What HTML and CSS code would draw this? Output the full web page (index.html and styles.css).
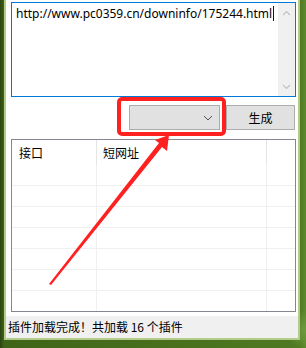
FILE: index.html
```html
<!DOCTYPE html>
<html lang="zh-CN">
<head>
  <meta charset="UTF-8">
  <title>短网址生成</title>
  <link rel="stylesheet" href="styles.css">
</head>
<body>
  <div class="window">
    <div class="client">
      <div class="input">
        <div class="text">http://www.pc0359.cn/downinfo/175244.html<span class="caret"></span></div>
        <div class="vscroll">
          <svg width="17" height="92" viewBox="0 0 17 92">
            <path d="M5 12 L8.5 8.5 L12 12" fill="none" stroke="#c2c2c2" stroke-width="1.2"/>
            <path d="M5 82 L8.5 85.5 L12 82" fill="none" stroke="#c2c2c2" stroke-width="1.2"/>
          </svg>
        </div>
      </div>
      <div class="actions">
        <div class="combo">
          <svg width="10" height="6" viewBox="0 0 10 6"><path d="M1 1 L5 5 L9 1" fill="none" stroke="#555" stroke-width="1"/></svg>
        </div>
        <button class="btn">生成</button>
      </div>
      <div class="list">
        <div class="head">
          <div class="cell c1">接口</div>
          <div class="cell c2">短网址</div>
          <div class="cell c3"></div>
        </div>
        <div class="row"><div class="cell c1"></div><div class="cell c2"></div><div class="cell c3"></div></div>
        <div class="row"><div class="cell c1"></div><div class="cell c2"></div><div class="cell c3"></div></div>
        <div class="row"><div class="cell c1"></div><div class="cell c2"></div><div class="cell c3"></div></div>
        <div class="row"><div class="cell c1"></div><div class="cell c2"></div><div class="cell c3"></div></div>
        <div class="row"><div class="cell c1"></div><div class="cell c2"></div><div class="cell c3"></div></div>
        <div class="row"><div class="cell c1"></div><div class="cell c2"></div><div class="cell c3"></div></div>
        <div class="row last"><div class="cell c1"></div><div class="cell c2"></div><div class="cell c3"></div></div>
      </div>
    </div>
    <div class="status">插件加载完成！共加载 16 个插件</div>
  </div>
  <!-- annotation drawn over the screenshot -->
  <svg class="mark" width="306" height="348" viewBox="0 0 306 348">
    <rect x="119" y="99" width="105" height="35" rx="3" fill="none" stroke="#ff2020" stroke-width="4"/>
    <path d="M49 284 L51 285 L162 147 L167 151 L169 135 L155 140 L159 143 Z" fill="#ff2020"/>
  </svg>
</body>
</html>
```

FILE: styles.css
```css
body {
  margin: 0;
  width: 306px;
  height: 348px;
  overflow: hidden;
  position: relative;
  background:
    radial-gradient(circle at 306px 330px, #6f9a3c 0, rgba(0,0,0,0) 20px),
    linear-gradient(90deg, #2c4410 0, #3f6318 4px, #4f7a22 300px, #5f8a2e 306px);
  font-family: "Noto Sans", "Noto Sans CJK SC", sans-serif;
  font-size: 12px;
  color: #000;
}
.window {
  margin-left: 4px;
  width: 292px;
  border: 2px solid #b4cc8a;
  border-top: none;
  display: flex;
  flex-direction: column;
}
.client {
  background: #fff;
  padding: 2px 2px 4px 5px;
}
.input {
  width: 283px;
  height: 93px;
  border: 1px solid #0078d7;
  display: flex;
}
.text {
  flex: 1;
  padding: 3px 0 0 4px;
  line-height: 16px;
  white-space: nowrap;
  overflow: hidden;
  font-family: "Noto Sans", "Noto Sans CJK SC", sans-serif;
}
.caret {
  display: inline-block;
  width: 1px;
  height: 15px;
  margin-left: 1px;
  vertical-align: -3px;
  background: #4a0000;
}
.vscroll {
  width: 17px;
  background: #f0f0f0;
}
.vscroll svg {
  display: block;
}
.actions {
  display: flex;
  justify-content: flex-end;
  gap: 6px;
  margin: 8px 1px 9px 0;
}
.combo {
  width: 89px;
  height: 23px;
  border: 1px solid #adadad;
  background: #e1e1e1;
  display: flex;
  align-items: center;
  justify-content: flex-end;
  padding-right: 6px;
  box-sizing: border-box;
  width: 91px;
  height: 25px;
}
.btn {
  width: 69px;
  height: 25px;
  border: 1px solid #adadad;
  background: #e1e1e1;
  font-family: "Noto Sans CJK SC", sans-serif;
  font-size: 12px;
  padding: 0;
  color: #000;
}
.list {
  width: 283px;
  height: 171px;
  border: 1px solid #828790;
  overflow: hidden;
}
.head, .row {
  display: flex;
}
.head {
  height: 25px;
  line-height: 25px;
  font-family: "Noto Sans CJK SC", sans-serif;
}
.row {
  height: 20px;
  border-bottom: 1px solid #f0f0f0;
}
.row.last {
  border-bottom: none;
}
.cell {
  box-sizing: border-box;
  border-right: 1px solid #f0f0f0;
}
.head .cell {
  border-right-color: #e5e5e5;
}
.c1 {
  width: 85px;
  padding-left: 7px;
}
.c2 {
  width: 170px;
  padding-left: 6px;
}
.c3 {
  flex: 1;
  border-right: none;
}
.status {
  height: 22px;
  line-height: 22px;
  background: #f0f0f0;
  padding-left: 2px;
  font-family: "Noto Sans CJK SC", sans-serif;
}
.mark {
  position: absolute;
  left: 0;
  top: 0;
}
```
